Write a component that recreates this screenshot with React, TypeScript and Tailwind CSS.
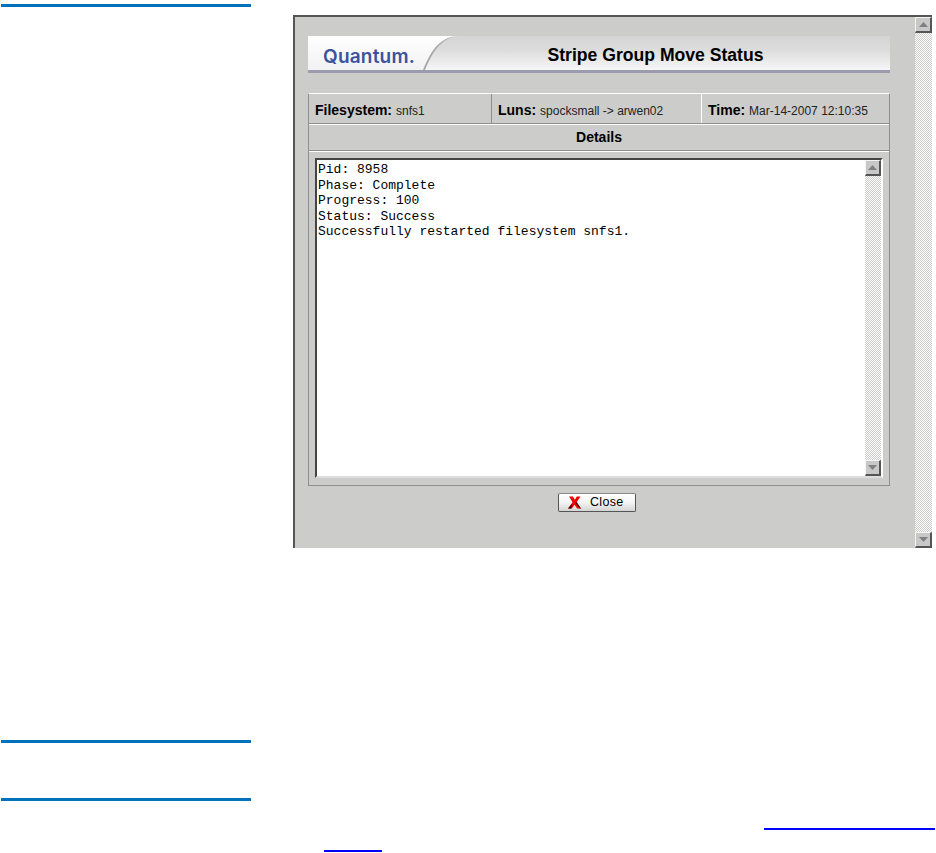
import React from "react";

const sans = "font-['Liberation_Sans',Arial,sans-serif]";
const checker =
  "bg-[repeating-conic-gradient(#ffffff_0_25%,#cccccb_0_50%)] bg-[length:2px_2px]";

const ScrollButton = ({ down, size }: { down?: boolean; size: string }) => (
  <div
    className={`${size} flex shrink-0 items-center justify-center bg-[#c8c8c8] border-t border-l border-t-[#f4f4f4] border-l-[#f4f4f4] border-r-2 border-b-2 border-r-[#555555] border-b-[#555555]`}
  >
    <svg width="9" height="5" viewBox="0 0 9 5">
      <path d={down ? "M0 0H9L4.5 5Z" : "M0 5H9L4.5 0Z"} fill="#808080" />
    </svg>
  </div>
);

const ScrollBar = ({ className, size }: { className: string; size: string }) => (
  <div className={`${className} ${checker} flex flex-col justify-between shrink-0`}>
    <ScrollButton size={size} />
    <ScrollButton size={size} down />
  </div>
);

const Banner = () => (
  <div className="relative flex h-[37px] items-center border-b-[3px] border-b-[#9b9dae] bg-gradient-to-b from-[#d4d4d4] via-[#dcdcdc] via-40% to-[#f6f6f6]">
    <svg className="absolute left-0 top-0" width="150" height="34" viewBox="0 0 150 34">
      <defs>
        <linearGradient id="logoPanel" x1="0" y1="0" x2="0" y2="1">
          <stop offset="0" stopColor="#ffffff" />
          <stop offset="1" stopColor="#f2f2f2" />
        </linearGradient>
      </defs>
      <path d="M0 0H150C134 1 125 12 116 34H0Z" fill="url(#logoPanel)" />
      <path d="M0 0H150C136 1 126 12 117 34H115C124 12 133 1 150 0Z" fill="#a9a9a9" />
    </svg>
    <div className="relative ml-[15px] w-[134px] pt-[7px] font-['Inter',sans-serif] text-[19px] font-semibold leading-none tracking-[0.2px] text-[#3b529e]">
      Quantum.
    </div>
    <div className={`${sans} relative flex-1 pt-[5px] text-center text-[17.6px] font-bold leading-none text-black pr-[36px]`}>
      Stripe Group Move Status
    </div>
  </div>
);

const Cell = ({ label, value, className }: { label: string; value: string; className: string }) => (
  <div className={`${className} flex items-center pl-[6px] pt-[3px] whitespace-nowrap text-black`}>
    <span className="text-[14px] font-bold">{label}</span>
    <span className="ml-[4px] pt-[1px] text-[12px] text-[#222222]">{value}</span>
  </div>
);

const log = [
  "Pid: 8958",
  "Phase: Complete",
  "Progress: 100",
  "Status: Success",
  "Successfully restarted filesystem snfs1.",
];

const Details = () => (
  <div className={`${sans} mt-[20px] ml-[13px] w-[582px] border-t border-l border-r border-t-white border-l-[#8f8f8f] border-r-[#8f8f8f]`}>
    <div className="flex h-[30px] border-b border-b-[#8f8f8f]">
      <Cell label="Filesystem:" value="snfs1" className="w-[182px]" />
      <Cell label="Luns:" value="spocksmall -> arwen02" className="w-[211px] border-l border-l-[#8f8f8f] border-r border-r-white" />
      <Cell label="Time:" value="Mar-14-2007 12:10:35" className="flex-1" />
    </div>
    <div className="flex h-[27px] items-center justify-center border-t border-t-white border-b border-b-[#8f8f8f] text-[14px] font-bold text-black">
      Details
    </div>
    <div className="h-[335px] border-t border-t-white border-b border-b-[#8f8f8f] px-[6px] pt-[6px]">
      <div className="flex h-[320px] w-[568px] border-t-2 border-l-2 border-t-[#444444] border-l-[#444444] border-r-2 border-b-2 border-r-white border-b-[#dddddd] bg-white">
        <div className="flex-1 pl-[1px] pt-[2px] font-['Liberation_Mono',monospace] text-[13px] leading-[15.6px] text-black">
          {log.map((line) => (
            <div key={line} className="whitespace-pre">
              {line}
            </div>
          ))}
        </div>
        <ScrollBar className="w-[16px] h-[316px]" size="h-[16px] w-[16px]" />
      </div>
    </div>
  </div>
);

const CloseButton = () => (
  <div className="mt-[7px] flex justify-center pr-[16px]">
    <div className={`${sans} flex h-[19px] w-[78px] items-center rounded-[2px] border border-[#555555] border-t-[#888888] bg-gradient-to-b from-[#ffffff] via-[#f4f4f4] to-[#d4d4d4] pl-[9px] text-[12.5px] text-black`}>
      <svg width="13" height="13" viewBox="0 0 12 12">
        <path d="M1 0.5H4.5L6.3 3.5L8.2 0.5H11.5L8 5.8L12 11.5H8.5L6 8L3.5 11.5H0L4.2 5.8Z" fill="#f00000" />
        <path d="M10.7 11.5L6.8 6L8 5.8L12 11.5ZM0 11.5L3.5 7.5L4 8L3 11.5Z" fill="#400000" />
      </svg>
      <span className="ml-[9px] tracking-[0.3px]">Close</span>
    </div>
  </div>
);

const Window = () => (
  <div className="ml-[42px] mt-[15px] flex h-[533px] w-[639px] border-t-2 border-l-2 border-t-[#555555] border-l-[#555555] bg-[#cccccb]">
    <div className="flex-1 min-w-0">
      <div className="mt-[19px] ml-[13px] w-[582px]">
        <Banner />
      </div>
      <Details />
      <CloseButton />
    </div>
    <ScrollBar className="w-[17px]" size="h-[16px] w-[17px]" />
  </div>
);

const BlueBar = ({ className }: { className: string }) => (
  <div className={`${className} ml-[1px] h-[3px] w-[250px] bg-[#0071bc]`} />
);

export default function App() {
  return (
    <div className="h-[853px] w-[936px] overflow-hidden bg-white">
      <div className="flex items-start">
        <BlueBar className="mt-[4px]" />
        <Window />
      </div>
      <BlueBar className="mt-[192px]" />
      <BlueBar className="mt-[55px]" />
      <div className="mt-[27px] ml-[764px] h-[2px] w-[171px] bg-[#0000ff]" />
      <div className="mt-[20px] ml-[324px] h-[2px] w-[58px] bg-[#0000ff]" />
    </div>
  );
}
